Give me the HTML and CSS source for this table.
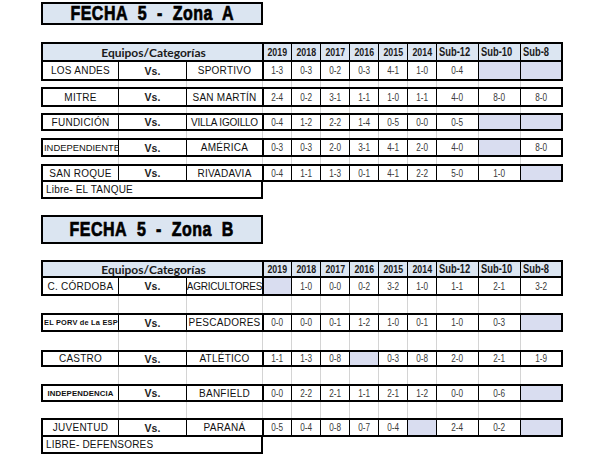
FILE: index.html
```html
<!DOCTYPE html>
<html lang="es">
<head>
<meta charset="utf-8">
<title>Fecha 5</title>
<link rel="stylesheet" href="styles.css">
</head>
<body>
<div class="sheet">
  <div class="title title-a"><span>FECHA&nbsp; 5&nbsp; -&nbsp; Zona&nbsp; A</span></div>
  <div class="space s17"></div>

  <div class="block grid first first-a">
    <div class="hd span3">Equipos/Categorías</div>
    <div class="hd yr"><span>2019</span></div><div class="hd yr"><span>2018</span></div><div class="hd yr"><span>2017</span></div><div class="hd yr"><span>2016</span></div><div class="hd yr"><span>2015</span></div><div class="hd yr"><span>2014</span></div>
    <div class="hd sub"><span>Sub-12</span></div><div class="hd sub"><span>Sub-10</span></div><div class="hd sub"><span>Sub-8</span></div>
    <div class="tm">LOS ANDES</div><div class="vs">Vs.</div><div class="tm">SPORTIVO</div>
    <div class="sc"><span>1-3</span></div><div class="sc"><span>0-3</span></div><div class="sc"><span>0-2</span></div><div class="sc"><span>0-3</span></div><div class="sc"><span>4-1</span></div><div class="sc"><span>1-0</span></div><div class="sc"><span>0-4</span></div><div class="sc na"></div><div class="sc na"></div>
  </div>
  <div class="gap grid h6"><i></i><i></i><i></i><i></i><i></i><i></i><i></i><i></i><i></i><i></i><i></i><i></i></div>
  <div class="block grid h20">
    <div class="tm">MITRE</div><div class="vs">Vs.</div><div class="tm">SAN MARTÍN</div>
    <div class="sc"><span>2-4</span></div><div class="sc"><span>0-2</span></div><div class="sc"><span>3-1</span></div><div class="sc"><span>1-1</span></div><div class="sc"><span>1-0</span></div><div class="sc"><span>1-1</span></div><div class="sc"><span>4-0</span></div><div class="sc"><span>8-0</span></div><div class="sc"><span>8-0</span></div>
  </div>
  <div class="gap grid h6"><i></i><i></i><i></i><i></i><i></i><i></i><i></i><i></i><i></i><i></i><i></i><i></i></div>
  <div class="block grid h18">
    <div class="tm">FUNDICIÓN</div><div class="vs">Vs.</div><div class="tm tight">VILLA IGOILLO</div>
    <div class="sc"><span>0-4</span></div><div class="sc"><span>1-2</span></div><div class="sc"><span>2-2</span></div><div class="sc"><span>1-4</span></div><div class="sc"><span>0-5</span></div><div class="sc"><span>0-0</span></div><div class="sc"><span>0-5</span></div><div class="sc na"></div><div class="sc na"></div>
  </div>
  <div class="gap grid h7"><i></i><i></i><i></i><i></i><i></i><i></i><i></i><i></i><i></i><i></i><i></i><i></i></div>
  <div class="block grid h19">
    <div class="tm left small9">INDEPENDIENTE</div><div class="vs">Vs.</div><div class="tm">AMÉRICA</div>
    <div class="sc"><span>0-3</span></div><div class="sc"><span>0-3</span></div><div class="sc"><span>2-0</span></div><div class="sc"><span>3-1</span></div><div class="sc"><span>4-1</span></div><div class="sc"><span>2-0</span></div><div class="sc"><span>4-0</span></div><div class="sc na"></div><div class="sc"><span>8-0</span></div>
  </div>
  <div class="gap grid h7"><i></i><i></i><i></i><i></i><i></i><i></i><i></i><i></i><i></i><i></i><i></i><i></i></div>
  <div class="block grid h18">
    <div class="tm">SAN ROQUE</div><div class="vs">Vs.</div><div class="tm">RIVADAVIA</div>
    <div class="sc"><span>0-4</span></div><div class="sc"><span>1-1</span></div><div class="sc"><span>1-3</span></div><div class="sc"><span>0-1</span></div><div class="sc"><span>4-1</span></div><div class="sc"><span>2-2</span></div><div class="sc"><span>5-0</span></div><div class="sc"><span>1-0</span></div><div class="sc na"></div>
  </div>
  <div class="libre">Libre- EL TANQUE</div>

  <div class="space s16"></div>
  <div class="title title-b"><span>FECHA&nbsp; 5&nbsp; -&nbsp; Zona&nbsp; B</span></div>
  <div class="space s16"></div>

  <div class="block grid first first-b">
    <div class="hd span3">Equipos/Categorías</div>
    <div class="hd yr"><span>2019</span></div><div class="hd yr"><span>2018</span></div><div class="hd yr"><span>2017</span></div><div class="hd yr"><span>2016</span></div><div class="hd yr"><span>2015</span></div><div class="hd yr"><span>2014</span></div>
    <div class="hd sub"><span>Sub-12</span></div><div class="hd sub"><span>Sub-10</span></div><div class="hd sub"><span>Sub-8</span></div>
    <div class="tm">C. CÓRDOBA</div><div class="vs">Vs.</div><div class="tm tight">AGRICULTORES</div>
    <div class="sc na"></div><div class="sc"><span>1-0</span></div><div class="sc"><span>0-0</span></div><div class="sc"><span>0-2</span></div><div class="sc"><span>3-2</span></div><div class="sc"><span>1-0</span></div><div class="sc"><span>1-1</span></div><div class="sc"><span>2-1</span></div><div class="sc"><span>3-2</span></div>
  </div>
  <div class="gap grid h17"><i></i><i></i><i></i><i></i><i></i><i></i><i></i><i></i><i></i><i></i><i></i><i></i></div>
  <div class="block grid h19">
    <div class="tm left small7">EL PORV de La ESP</div><div class="vs">Vs.</div><div class="tm">PESCADORES</div>
    <div class="sc"><span>0-0</span></div><div class="sc"><span>0-0</span></div><div class="sc"><span>0-1</span></div><div class="sc"><span>1-2</span></div><div class="sc"><span>1-0</span></div><div class="sc"><span>0-1</span></div><div class="sc"><span>1-0</span></div><div class="sc"><span>0-3</span></div><div class="sc na"></div>
  </div>
  <div class="gap grid h18"><i></i><i></i><i></i><i></i><i></i><i></i><i></i><i></i><i></i><i></i><i></i><i></i></div>
  <div class="block grid h17">
    <div class="tm">CASTRO</div><div class="vs">Vs.</div><div class="tm">ATLÉTICO</div>
    <div class="sc"><span>1-1</span></div><div class="sc"><span>1-3</span></div><div class="sc"><span>0-8</span></div><div class="sc na"></div><div class="sc"><span>0-3</span></div><div class="sc"><span>0-8</span></div><div class="sc"><span>2-0</span></div><div class="sc"><span>2-1</span></div><div class="sc"><span>1-9</span></div>
  </div>
  <div class="gap grid h17"><i></i><i></i><i></i><i></i><i></i><i></i><i></i><i></i><i></i><i></i><i></i><i></i></div>
  <div class="block grid h18">
    <div class="tm small8">INDEPENDENCIA</div><div class="vs">Vs.</div><div class="tm">BANFIELD</div>
    <div class="sc"><span>0-0</span></div><div class="sc"><span>2-2</span></div><div class="sc"><span>2-1</span></div><div class="sc"><span>1-1</span></div><div class="sc"><span>2-1</span></div><div class="sc"><span>1-2</span></div><div class="sc"><span>0-0</span></div><div class="sc"><span>0-6</span></div><div class="sc na"></div>
  </div>
  <div class="gap grid h16"><i></i><i></i><i></i><i></i><i></i><i></i><i></i><i></i><i></i><i></i><i></i><i></i></div>
  <div class="block grid h19">
    <div class="tm">JUVENTUD</div><div class="vs">Vs.</div><div class="tm">PARANÁ</div>
    <div class="sc"><span>0-5</span></div><div class="sc"><span>0-4</span></div><div class="sc"><span>0-8</span></div><div class="sc"><span>0-7</span></div><div class="sc"><span>0-4</span></div><div class="sc na"></div><div class="sc"><span>2-4</span></div><div class="sc"><span>0-2</span></div><div class="sc na"></div>
  </div>
  <div class="libre">LIBRE- DEFENSORES</div>
</div>
</body>
</html>
```

FILE: styles.css
```css
* {
  box-sizing: border-box;
  margin: 0;
  padding: 0;
}

html, body {
  background: #ffffff;
}

body {
  width: 608px;
  height: 456px;
  overflow: hidden;
  font-family: "Liberation Sans", Arial, sans-serif;
  color: #000;
}

.sheet {
  display: flex;
  flex-direction: column;
  align-items: flex-start;
  padding: 2px 0 0 41px;
}

.space.s16 { height: 16px; }
.space.s17 { height: 17px; }

.title {
  width: 222px;
  border: 2px solid #000;
  background: #dbe5f1;
  display: flex;
  align-items: center;
  justify-content: center;
  font-family: "Liberation Sans", sans-serif;
  font-weight: 700;
  font-size: 20px;
  color: #000;
}

.title span {
  display: inline-block;
  white-space: nowrap;
  letter-spacing: 0.6px;
  transform: scaleX(0.8);
  -webkit-text-stroke: 0.7px #000;
}

.title-a { height: 23px; }
.title-b { height: 29px; }

.grid {
  display: grid;
  grid-template-columns: 75px 67px 75px repeat(6, 28px) 41px 41px 40px;
  column-gap: 1px;
}

.block {
  width: 522px;
  border: 2px solid #000;
  background: #000;
}

.block.first { row-gap: 2px; }
.first-a { height: 39px; grid-template-rows: 16px 17px; }
.first-b { height: 36px; grid-template-rows: 14px 16px; }

.block.h17 { height: 17px; }
.block.h18 { height: 18px; }
.block.h19 { height: 19px; }
.block.h20 { height: 20px; }

.block > div {
  background: #fff;
  display: flex;
  align-items: center;
  justify-content: center;
  white-space: nowrap;
  overflow: visible;
  min-width: 0;
}

.block > .hd {
  background: #dce6f2;
  font-weight: 700;
  color: #1a1a1a;
}

/* slightly heavier rule between the team columns and the scores */
.block > .span3 + div,
.block > .tm + .vs + .tm + div {
  box-shadow: inset 1px 0 0 #000;
}

.hd.span3 {
  grid-column: span 3;
  font-family: Lato, "Open Sans", sans-serif;
  font-size: 12px;
  padding-left: 2px;
}

.hd.yr span, .hd.sub span, .sc span {
  display: inline-block;
  white-space: nowrap;
}

.hd.yr {
  font-size: 11px;
  padding-left: 1px;
}

.hd.yr span {
  transform: scaleX(0.8);
}

.hd.sub {
  font-size: 12px;
  justify-content: flex-start;
  padding-left: 2px;
}

.hd.sub span {
  transform: scaleX(0.78);
  transform-origin: left center;
}

.tm {
  font-size: 10px;
  letter-spacing: 0.25px;
  color: #111;
}

.tm.tight { letter-spacing: -0.2px; }

.tm.left {
  justify-content: flex-start;
  padding-left: 1px;
}

.tm.small9 { font-size: 9.4px; letter-spacing: 0; }
.tm.small8 { font-size: 7.8px; font-weight: 700; letter-spacing: 0.1px; }
.tm.small7 { font-size: 7.4px; font-weight: 700; letter-spacing: 0.2px; }

.vs {
  font-weight: 700;
  font-size: 10.5px;
  color: #222;
}

.sc {
  font-size: 10px;
  color: #3a3a3a;
}

.sc span {
  transform: scaleX(0.82);
}

.block > .na { background: #d9ddf0; }

.gap {
  width: 522px;
  padding: 0 2px;
  background: #d4d4d4;
  background-clip: content-box;
}

.gap.h6 { height: 6px; }
.gap.h7 { height: 7px; }
.gap.h16 { height: 16px; }
.gap.h17 { height: 17px; }
.gap.h18 { height: 18px; }

.gap > i {
  display: block;
  background: #fff;
}

.libre {
  width: 222px;
  height: 17px;
  border: 2px solid #000;
  border-top: none;
  display: flex;
  align-items: center;
  padding-left: 3px;
  font-size: 10px;
  letter-spacing: 0.2px;
  color: #111;
}
```
